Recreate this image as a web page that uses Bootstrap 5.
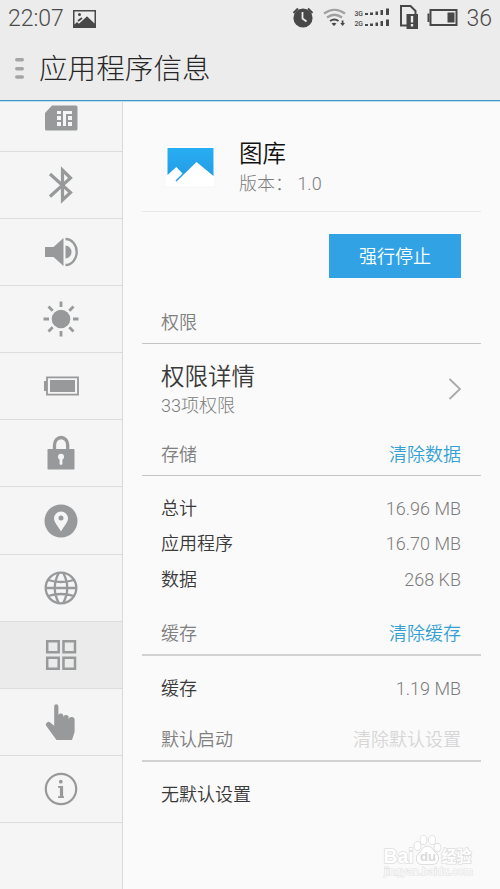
<!DOCTYPE html>
<html lang="zh-CN">
<head>
<meta charset="utf-8">
<meta name="viewport" content="width=device-width, initial-scale=1">
<title>应用程序信息</title>
<link href="https://cdn.jsdelivr.net/npm/bootstrap@5.3.0/dist/css/bootstrap.min.css" rel="stylesheet">
<style>
  body { font-family: Roboto, "Noto Sans CJK SC", sans-serif; font-weight: 350; font-size: 18px; line-height: 28px; background: #fafafa; color: #3a3a3a; height: 889px; overflow: hidden; }
  svg { display: block; flex: none; }
  .top-area { height: 101px; background: #ececec; border-bottom: 1px solid #3d98c8; box-shadow: 0 1px 0 #bfe0f0; position: relative; }
  .status-bar { height: 38px; padding: 0 8px 0 8px; font-size: 23px; color: #4a4a4a; }
  .photo-icon { margin-left: 9px; }
  .title-bar { height: 60px; padding-left: 15px; }
  .title-bar h1 { font-size: 28.6px; font-weight: 300; line-height: 40px; color: #262626; margin-left: 15px; padding-top: 1px; }
  .page-body { height: 788px; }
  .side { width: 123px; background: #f5f5f5; border-right: 1px solid #d9d9d9; color: #97999a; }
  .side-cell { height: 67.1px; border-bottom: 1px solid #dcdcdc; }
  .side-cell.first-cell { height: 51px; padding-bottom: 16px; }
  .side-cell.current { background: #ebebeb; }
  .main-pane { padding: 0 19px; }
  .app-head { height: 111px; padding: 0 19px 0 22px; border-bottom: 1px solid #e8e8e8; }
  .app-icon { margin-top: 43px; }
  .app-label { margin: 37px 0 0 21px; }
  .app-name { font-size: 23.5px; line-height: 32px; color: #111; }
  .soft { color: #7c7c7c; font-weight: 300; }
  .action-area { height: 88px; padding: 22px 20px 0; }
  .btn-stop { width: 132px; height: 44px; border-radius: 0; background: #31a3e5; color: #fff; font-size: 18px; font-weight: 350; padding: 1px 0 0; border: 0; }
  .sec-head { height: 44px; padding: 2px 20px 0 19px; border-bottom: 1px solid #c4c4c4; color: #808080; }
  .sec-head.thick { border-bottom: 2px solid #d1d1d1; }
  .sec-head a { color: #35a0d2; text-decoration: none; }
  .sec-head .off { color: #d6d6d6; }
  .detail-row { height: 88px; padding: 2px 20px 0 19px; }
  .detail-text { padding-top: 3px; }
  .detail-name { font-size: 23.5px; line-height: 30px; }
  .rows { padding: 15px 20px 0 19px; }
  .rows > div { height: 35.6px; }
  .rows.three { height: 136px; }
  .rows.one { height: 62px; }
  .watermark { position: absolute; left: 380px; top: 832px; }
</style>
<script src="https://cdn.jsdelivr.net/npm/bootstrap@5.3.0/dist/js/bootstrap.bundle.min.js"></script>
</head>
<body>
<header class="top-area">
  <div class="status-bar d-flex align-items-center fw-light">
    <span>22:07</span>
    <svg class="photo-icon" width="24" height="20" viewBox="0 0 24 20"><path fill="#484848" fill-rule="evenodd" d="M0 1h23v18H0zM1.500 2.500v13L4 13l2.200 2L14 7.500l7.500 7V2.500z"/><circle cx="6.500" cy="5.500" r="1.500" fill="#484848"/><path d="M5 12l4-3" stroke="#484848" stroke-width="1.800"/><path d="M3 17.500L14 7.500l8 8v2z" fill="#484848"/></svg>
    <div class="d-flex align-items-center ms-auto">
      <svg width="176" height="30" viewBox="290 4 176 30" fill="#484848">
        <circle cx="303" cy="18" r="9.600"/>
        <path d="M293.500 13l4.500-4.500M312.500 13L308 8.500" stroke="#484848" stroke-width="2"/>
        <path d="M302.500 12v6.500l4 3" stroke="#ececec" stroke-width="1.800" fill="none"/>
        <g fill="none" stroke="#a0a0a0" stroke-width="2.200"><path d="M324 13.500q10.500-7.500 21 0"/><path d="M327 17.500q7.500-5.500 15 0"/></g>
        <path d="M330 21q4.500-3 8.500 0" fill="none" stroke="#484848" stroke-width="2"/>
        <path d="M331.500 23.500q2.500-1.500 5 0L334 26zM341.700 20.500h1.800v2.500h1.500l-2.400 3-2.400-3h1.500z"/>
        <g font-family="Roboto, sans-serif" font-size="8" font-weight="500"><text x="354.500" y="15.500" textLength="8.500" lengthAdjust="spacingAndGlyphs">3G</text><text x="354.500" y="26.200" textLength="8.500" lengthAdjust="spacingAndGlyphs">2G</text></g>
        <path d="M365 13h3v2h-3zM370 12.500h3v2.500h-3zM375.500 11.500h2.500v3.500h-2.500zM380.500 10h2.500v5h-2.500zM386 8.500h3v6.500h-3zM365 24h3v2h-3zM370 23.500h3v2.500h-3zM375.500 22.500h2.500v3.500h-2.500zM380.500 21h2.500v5h-2.500zM386 19.500h3v6.500h-3z"/>
        <path d="M401 6h9.500l5 5v14.500H401z" fill="none" stroke="#484848" stroke-width="2"/>
        <path d="M406.500 14H418v15h-11.500z"/><path d="M410.800 16h2.400v6.500h-2.400zM410.800 24h2.400v2.500h-2.400z" fill="#ececec"/>
        <path d="M430.500 10H456.500v15h-26z" fill="none" stroke="#484848" stroke-width="2"/><path d="M427.500 13.500h2v8.500h-2zM447.500 12.500h7v10h-7z"/>
      </svg>
      <span>36</span>
    </div>
  </div>
  <div class="title-bar d-flex align-items-center">
    <svg width="9" height="22" viewBox="0 0 9 22" fill="#a5a5a5"><rect y="1" width="9" height="3.500" rx="1.700"/><rect y="10" width="9" height="3.500" rx="1.700"/><rect y="18.300" width="9" height="3.500" rx="1.700"/></svg>
    <h1 class="mb-0">应用程序信息</h1>
  </div>
</header>
<div class="page-body d-flex">
  <nav class="side flex-shrink-0">
    <div class="side-cell first-cell d-flex align-items-center justify-content-center">
      <svg width="34" height="26" viewBox="0 0 34 26"><path fill="currentColor" d="M8 .5h24q1.500 0 1.500 1.500v22q0 1.500-1.500 1.500H2.500Q1 25.500 1 24V8z"/><path fill="#f5f5f5" d="M13 6h4v3h-4zM13 11h4v4h-4zM13 17h4v4h-4zM19 6h9v3h-6v12h-3zM24 11h4v4h-4zM24 17h4v4h-4z"/></svg>
    </div>
    <div class="side-cell d-flex align-items-center justify-content-center">
      <svg width="40" height="40" viewBox="0 0 40 40"><path d="M9 9l20.500 18.500L21.500 35V5l8 8L9 31.500" fill="none" stroke="currentColor" stroke-width="3.200"/></svg>
    </div>
    <div class="side-cell d-flex align-items-center justify-content-center">
      <svg width="40" height="40" viewBox="0 0 40 40"><path fill="currentColor" d="M4 15h8.500l10-9v28l-10-9H4zM24.500 13.500a6 6.500 0 0 1 0 13z"/><path d="M24.500 7a11.200 13 0 0 1 0 26" fill="none" stroke="currentColor" stroke-width="2.300"/></svg>
    </div>
    <div class="side-cell d-flex align-items-center justify-content-center">
      <svg width="40" height="40" viewBox="0 0 40 40"><circle cx="20" cy="20" r="9.300" fill="currentColor"/><path d="M20 2.500v5.500M20 32v5.500M2.500 20H8M32 20h5.500M7.500 7.500l4.200 4.200M28.300 28.300l4.200 4.200M7.500 32.500l4.200-4.200M28.300 11.700l4.200-4.200" stroke="currentColor" stroke-width="2.800"/></svg>
    </div>
    <div class="side-cell d-flex align-items-center justify-content-center">
      <svg width="40" height="40" viewBox="0 0 40 40"><path d="M6 11.300h31v17.400H6z" fill="none" stroke="currentColor" stroke-width="1.800"/><path fill="currentColor" d="M3 15h3v10H3zM9 14h25v12H9z"/></svg>
    </div>
    <div class="side-cell d-flex align-items-center justify-content-center">
      <svg width="40" height="40" viewBox="0 0 40 40"><path d="M13.500 18v-6a6.600 7.500 0 0 1 13.200 0v6" fill="none" stroke="currentColor" stroke-width="3.300"/><rect x="6.500" y="16" width="27" height="20.500" rx=".8" fill="currentColor"/><circle cx="20" cy="23.800" r="3" fill="#f5f5f5"/><path d="M20 24v6.500" stroke="#f5f5f5" stroke-width="2.800" stroke-linecap="round"/></svg>
    </div>
    <div class="side-cell d-flex align-items-center justify-content-center">
      <svg width="40" height="40" viewBox="0 0 40 40"><circle cx="20" cy="20" r="16.500" fill="currentColor"/><path fill="#f5f5f5" d="M20 30.500C17.500 25.500 13 21.500 13 17.500a7 7 0 0 1 14 0c0 4-4.500 8-7 13z"/><circle cx="20" cy="17" r="2.500" fill="currentColor"/></svg>
    </div>
    <div class="side-cell d-flex align-items-center justify-content-center">
      <svg width="40" height="40" viewBox="0 0 40 40" fill="none" stroke="currentColor" stroke-width="2.300"><circle cx="20" cy="20" r="15.300"/><path d="M18 4.500q-8.500 15.500 0 31M22 4.500q8.500 15.500 0 31M4.500 20h31M7 12q13 4 26 0M7 28q13-4 26 0"/></svg>
    </div>
    <div class="side-cell current d-flex align-items-center justify-content-center">
      <svg width="40" height="40" viewBox="0 0 40 40" fill="none" stroke="currentColor" stroke-width="2.500"><path d="M6.200 6.200h11.500v11H6.200zM22.500 6.200H34v11H22.500zM6.200 22.700h11.500v11H6.200zM22.500 22.700H34v11H22.500z"/></svg>
    </div>
    <div class="side-cell d-flex align-items-center justify-content-center">
      <svg width="40" height="40" viewBox="0 0 40 40" fill="currentColor"><path d="M13.200 4.300a2.100 2.100 0 0 1 4.200 0V14.500a2.300 2.300 0 0 1 5-.8v1.500a2.300 2.300 0 0 1 5.200.7v1.800a2.300 2.300 0 0 1 6 .5V30l-2.600 8H15.500L5.700 24.500a2.500 2.500 0 0 1 3.800-3.700l3.700 3z"/></svg>
    </div>
    <div class="side-cell d-flex align-items-center justify-content-center">
      <svg width="40" height="40" viewBox="0 0 40 40"><circle cx="20" cy="20" r="15.200" fill="none" stroke="currentColor" stroke-width="2.200"/><circle cx="19.800" cy="12.700" r="1.900" fill="currentColor"/><path d="M17 17.800h4.200V28M17 28.200h6" fill="none" stroke="currentColor" stroke-width="1.800"/><path d="M20.200 17v11" stroke="currentColor" stroke-width="2.600"/></svg>
    </div>
  </nav>
  <main class="main-pane flex-grow-1">
    <section class="app-head d-flex">
      <svg class="app-icon" width="54" height="44" viewBox="0 0 54 44">
        <defs><linearGradient id="sky" x2="0" y2="1"><stop stop-color="#29aef2"/><stop offset="1" stop-color="#2099e5"/></linearGradient></defs>
        <rect x="1" y="1.500" width="50" height="41.500" fill="#fff" stroke="#f3f3f3" stroke-width=".7"/><path fill="url(#sky)" d="M3.500 4H49.500V32L32.500 18 12.500 37.500 11.500 36.500 18.500 29.500 12.300 23 3.500 31z"/>
      </svg>
      <div class="app-label">
        <div class="app-name">图库</div>
        <div class="soft">版本：&nbsp;1.0</div>
      </div>
    </section>
    <div class="action-area d-flex justify-content-end"><button class="btn btn-stop" type="button">强行停止</button></div>
    <div class="sec-head d-flex align-items-center">权限</div>
    <div class="detail-row d-flex align-items-center justify-content-between">
      <div class="detail-text"><div class="detail-name">权限详情</div><div class="soft">33项权限</div></div>
      <svg width="13" height="24" viewBox="0 0 13 24"><path d="M1.500 2L12 12 1.500 22" fill="none" stroke="#aaa" stroke-width="1.900"/></svg>
    </div>
    <div class="sec-head d-flex align-items-center justify-content-between">存储<a href="#">清除数据</a></div>
    <div class="rows three">
      <div class="d-flex align-items-center justify-content-between">总计<span class="soft">16.96 MB</span></div>
      <div class="d-flex align-items-center justify-content-between">应用程序<span class="soft">16.70 MB</span></div>
      <div class="d-flex align-items-center justify-content-between">数据<span class="soft">268 KB</span></div>
    </div>
    <div class="sec-head thick d-flex align-items-center justify-content-between">缓存<a href="#">清除缓存</a></div>
    <div class="rows one"><div class="d-flex align-items-center justify-content-between">缓存<span class="soft">1.19 MB</span></div></div>
    <div class="sec-head thick d-flex align-items-center justify-content-between">默认启动<span class="off">清除默认设置</span></div>
    <div class="rows"><div class="d-flex align-items-center">无默认设置</div></div>
  </main>
</div>
<svg class="watermark" width="100" height="50" viewBox="380 832 100 50" fill="#fff" stroke="#dedede" stroke-width="1.600" paint-order="stroke" font-family="'Liberation Sans', 'Noto Sans CJK SC', sans-serif">
  <text x="383.500" y="863" font-size="20" font-weight="700" textLength="30" lengthAdjust="spacingAndGlyphs">Bai</text>
  <g stroke-width="1.800"><ellipse cx="417.500" cy="846" rx="3" ry="4"/><ellipse cx="423.500" cy="840" rx="3" ry="4.200"/><ellipse cx="432" cy="840" rx="3" ry="4.200"/><ellipse cx="437.500" cy="847.500" rx="3" ry="3.800"/><path d="M427.500 846.500c4.500 0 5 4 8 6.500 4 3.500 3.500 11-3 11h-10c-7 0-7-7.500-3-11 3-2.500 3.500-6.500 8-6.500z"/></g>
  <text x="420" y="861" font-size="13" font-weight="700" fill="#d9d9d9" stroke="none">du</text>
  <text x="441.500" y="862" font-size="15.500" font-weight="700" textLength="30" lengthAdjust="spacingAndGlyphs">经验</text>
  <text x="384" y="875" font-size="11" stroke-width="1" textLength="89" lengthAdjust="spacingAndGlyphs">jingyan.baidu.com</text>
</svg>
</body>
</html>
